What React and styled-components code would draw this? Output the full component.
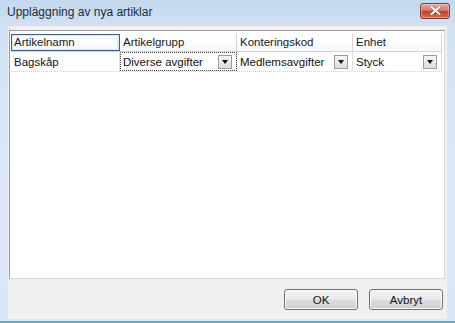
import React, { useState } from 'react';
import styled, { createGlobalStyle } from 'styled-components';

const GlobalStyle = createGlobalStyle`
  html, body {
    margin: 0;
    padding: 0;
    background: #fff;
  }
  body {
    font-family: "Liberation Sans", Arial, sans-serif;
  }
`;

const Window = styled.div`
  width: 455px;
  height: 323px;
  box-sizing: border-box;
  display: flex;
  flex-direction: column;
  background: linear-gradient(to bottom, #c3d8ee 0px, #d3e2f3 30px, #dde9f6 200px, #d9e6f4 100%);
  border-bottom: 2px solid #52b3c4;
  overflow: hidden;
`;

const TitleBar = styled.div`
  height: 26px;
  flex-shrink: 0;
  display: flex;
  align-items: center;
  justify-content: space-between;
  padding: 0 5px 1px 7px;
  box-sizing: border-box;
`;

const Title = styled.span`
  font-family: "Liberation Sans", Arial, sans-serif;
  font-size: 12px;
  color: #1e2a3a;
  margin-top: -1px;
`;

const CloseButton = styled.button`
  width: 30px;
  height: 16px;
  margin-top: -4px;
  padding: 0;
  border: 1px solid #7a3b33;
  border-radius: 3px;
  background: linear-gradient(to bottom, #e9a99a 0%, #d7796b 45%, #c2402c 55%, #d0705a 100%);
  box-shadow: inset 0 0 0 1px rgba(255, 255, 255, 0.35);
  display: flex;
  align-items: center;
  justify-content: center;
  cursor: pointer;
`;

const Body = styled.div`
  flex: 1;
  margin: 0 8px 2px 8px;
  background: #f0f0f0;
  display: flex;
  flex-direction: column;
  padding: 4px 2px 0 1px;
`;

const Grid = styled.div`
  height: 249px;
  box-sizing: border-box;
  background: #fff;
  border: 1px solid #9a9a9a;
  border-right-color: #d8d8d8;
  border-bottom-color: #d8d8d8;
  padding: 3px 2px 0 1px;
`;

const Row = styled.div`
  display: flex;
  height: ${(p) => p.$height}px;
  border-bottom: 1px ${(p) => (p.$dotted ? 'dotted #d0d0d0' : 'solid #d5d5d5')};
`;

const HeaderCell = styled.div`
  width: ${(p) => p.$width}px;
  box-sizing: border-box;
  font-size: 11.5px;
  color: #1a1a1a;
  padding: 2px 3px 0;
  border-right: 1px solid #d5d5d5;
  background: linear-gradient(to bottom, #ffffff, #f7f8fa);
  ${(p) => p.$focused && 'outline: 1px solid #3f5f8f; outline-offset: -1px; box-shadow: inset 0 0 0 2px #dce6f4;'}
`;

const Cell = styled.div`
  width: ${(p) => p.$width}px;
  box-sizing: border-box;
  font-size: 11.5px;
  color: #111;
  padding: 0 3px 0 3px;
  border-right: 1px solid #e0e0e0;
  display: flex;
  align-items: center;
  justify-content: space-between;
  ${(p) => p.$focused && 'outline: 1px dotted #444; outline-offset: -1px;'}
`;

const DropButton = styled.span`
  width: 14px;
  height: 14px;
  box-sizing: border-box;
  border: 1px solid #9c9c9c;
  background: linear-gradient(to bottom, #f6f6f6, #dcdcdc);
  display: flex;
  align-items: center;
  justify-content: center;
  margin-right: 1px;
  &::after {
    content: '';
    border-left: 3.5px solid transparent;
    border-right: 3.5px solid transparent;
    border-top: 4px solid #111;
    margin-top: 1px;
  }
`;

const ButtonRow = styled.div`
  display: flex;
  justify-content: flex-end;
  gap: 11px;
  padding: 10px 2px 0 0;
`;

const DialogButton = styled.button`
  width: 74px;
  height: 21px;
  box-sizing: border-box;
  border: 1px solid #707070;
  border-radius: 3px;
  background: linear-gradient(to bottom, #f2f2f2 0%, #ebebeb 48%, #dddddd 52%, #cfcfcf 100%);
  box-shadow: inset 0 0 0 1px #fcfcfc;
  font-family: "Liberation Sans", Arial, sans-serif;
  font-size: 11.5px;
  color: #111;
  padding: 0;
  cursor: pointer;
`;

const columns = [
  { name: 'Artikelnamn', width: 109 },
  { name: 'Artikelgrupp', width: 117 },
  { name: 'Konteringskod', width: 116 },
  { name: 'Enhet', width: 89 },
];

const row = [
  { value: 'Bagskåp', combo: false },
  { value: 'Diverse avgifter', combo: true, focused: true },
  { value: 'Medlemsavgifter', combo: true },
  { value: 'Styck', combo: true },
];

const CloseIcon = () => (
  <svg width="11" height="9" viewBox="0 0 11 9">
    <path d="M1.5 1 L9.5 8 M9.5 1 L1.5 8" stroke="#5a1a12" strokeWidth="3" strokeLinecap="round" opacity="0.4" />
    <path d="M1.5 1 L9.5 8 M9.5 1 L1.5 8" stroke="#fff" strokeWidth="2" strokeLinecap="round" />
  </svg>
);

const App = () => {
  const [articles] = useState([row]);

  return (
    <>
      <GlobalStyle />
      <Window>
        <TitleBar>
          <Title>Uppläggning av nya artiklar</Title>
          <CloseButton aria-label="Stäng">
            <CloseIcon />
          </CloseButton>
        </TitleBar>
        <Body>
          <Grid>
            <Row $height={17}>
              {columns.map((col, i) => (
                <HeaderCell key={col.name} $width={col.width} $focused={i === 0}>
                  {col.name}
                </HeaderCell>
              ))}
            </Row>
            {articles.map((cells, r) => (
              <Row key={r} $height={19} $dotted>
                {cells.map((cell, i) => (
                  <Cell key={i} $width={columns[i].width} $focused={cell.focused}>
                    <span>{cell.value}</span>
                    {cell.combo && <DropButton />}
                  </Cell>
                ))}
              </Row>
            ))}
          </Grid>
          <ButtonRow>
            <DialogButton>OK</DialogButton>
            <DialogButton>Avbryt</DialogButton>
          </ButtonRow>
        </Body>
      </Window>
    </>
  );
};

export default App;
